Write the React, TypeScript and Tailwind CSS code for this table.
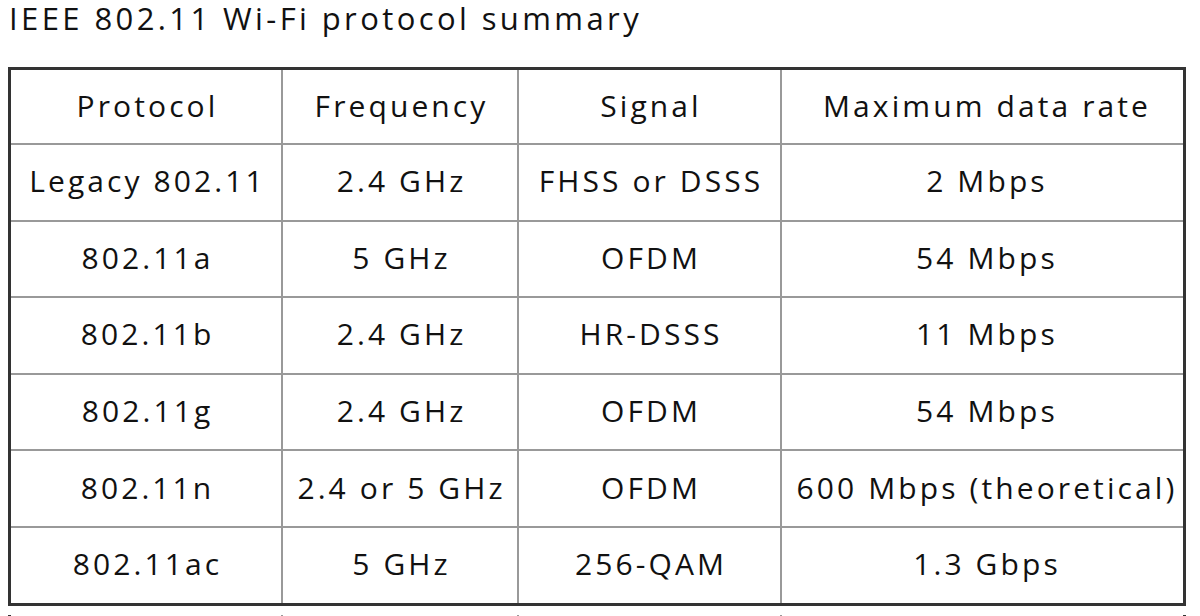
import React from "react";

const rows: string[][] = [
  ["Legacy 802.11", "2.4 GHz", "FHSS or DSSS", "2 Mbps"],
  ["802.11a", "5 GHz", "OFDM", "54 Mbps"],
  ["802.11b", "2.4 GHz", "HR-DSSS", "11 Mbps"],
  ["802.11g", "2.4 GHz", "OFDM", "54 Mbps"],
  ["802.11n", "2.4 or 5 GHz", "OFDM", "600 Mbps (theoretical)"],
  ["802.11ac", "5 GHz", "256-QAM", "1.3 Gbps"],
];

const header = ["Protocol", "Frequency", "Signal", "Maximum data rate"];

function Row({ cells, first }: { cells: string[]; first?: boolean }) {
  return (
    <div
      className={`grid grid-cols-[270px_236px_263px_409px] ${
        first ? "h-[73px]" : "h-[76.6px] border-t-2 border-[#999999]"
      }`}
    >
      {cells.map((c, i) => (
        <div
          key={i}
          className={`flex items-center justify-center whitespace-nowrap pb-[3px] ${
            i > 0 ? "border-l-2 border-[#999999]" : ""
          }`}
        >
          <span className="mr-[-3px]">{c}</span>
        </div>
      ))}
    </div>
  );
}

export default function App() {
  return (
    <div
      className="w-[1200px] h-[616px] overflow-hidden bg-white text-[#111111] pl-[8px]"
      style={{ fontFamily: '"Open Sans", "Noto Sans", sans-serif' }}
    >
      <div className="text-[31px] leading-[36px] tracking-[3.4px] pl-[1px] whitespace-nowrap">
        IEEE 802.11 Wi-Fi protocol summary
      </div>
      <div className="mt-[31px] w-[1178px] border-[3px] border-[#333333] text-[30px] tracking-[3.1px]">
        <Row cells={header} first />
        {rows.map((r, i) => (
          <Row key={i} cells={r} />
        ))}
      </div>
      <div className="mt-[9px] w-[1178px] h-[20px] border-x-[3px] border-[#333333] grid grid-cols-[270px_236px_263px_409px]">
        <div />
        <div className="border-l-2 border-[#999999]" />
        <div className="border-l-2 border-[#999999]" />
        <div className="border-l-2 border-[#999999]" />
      </div>
    </div>
  );
}
